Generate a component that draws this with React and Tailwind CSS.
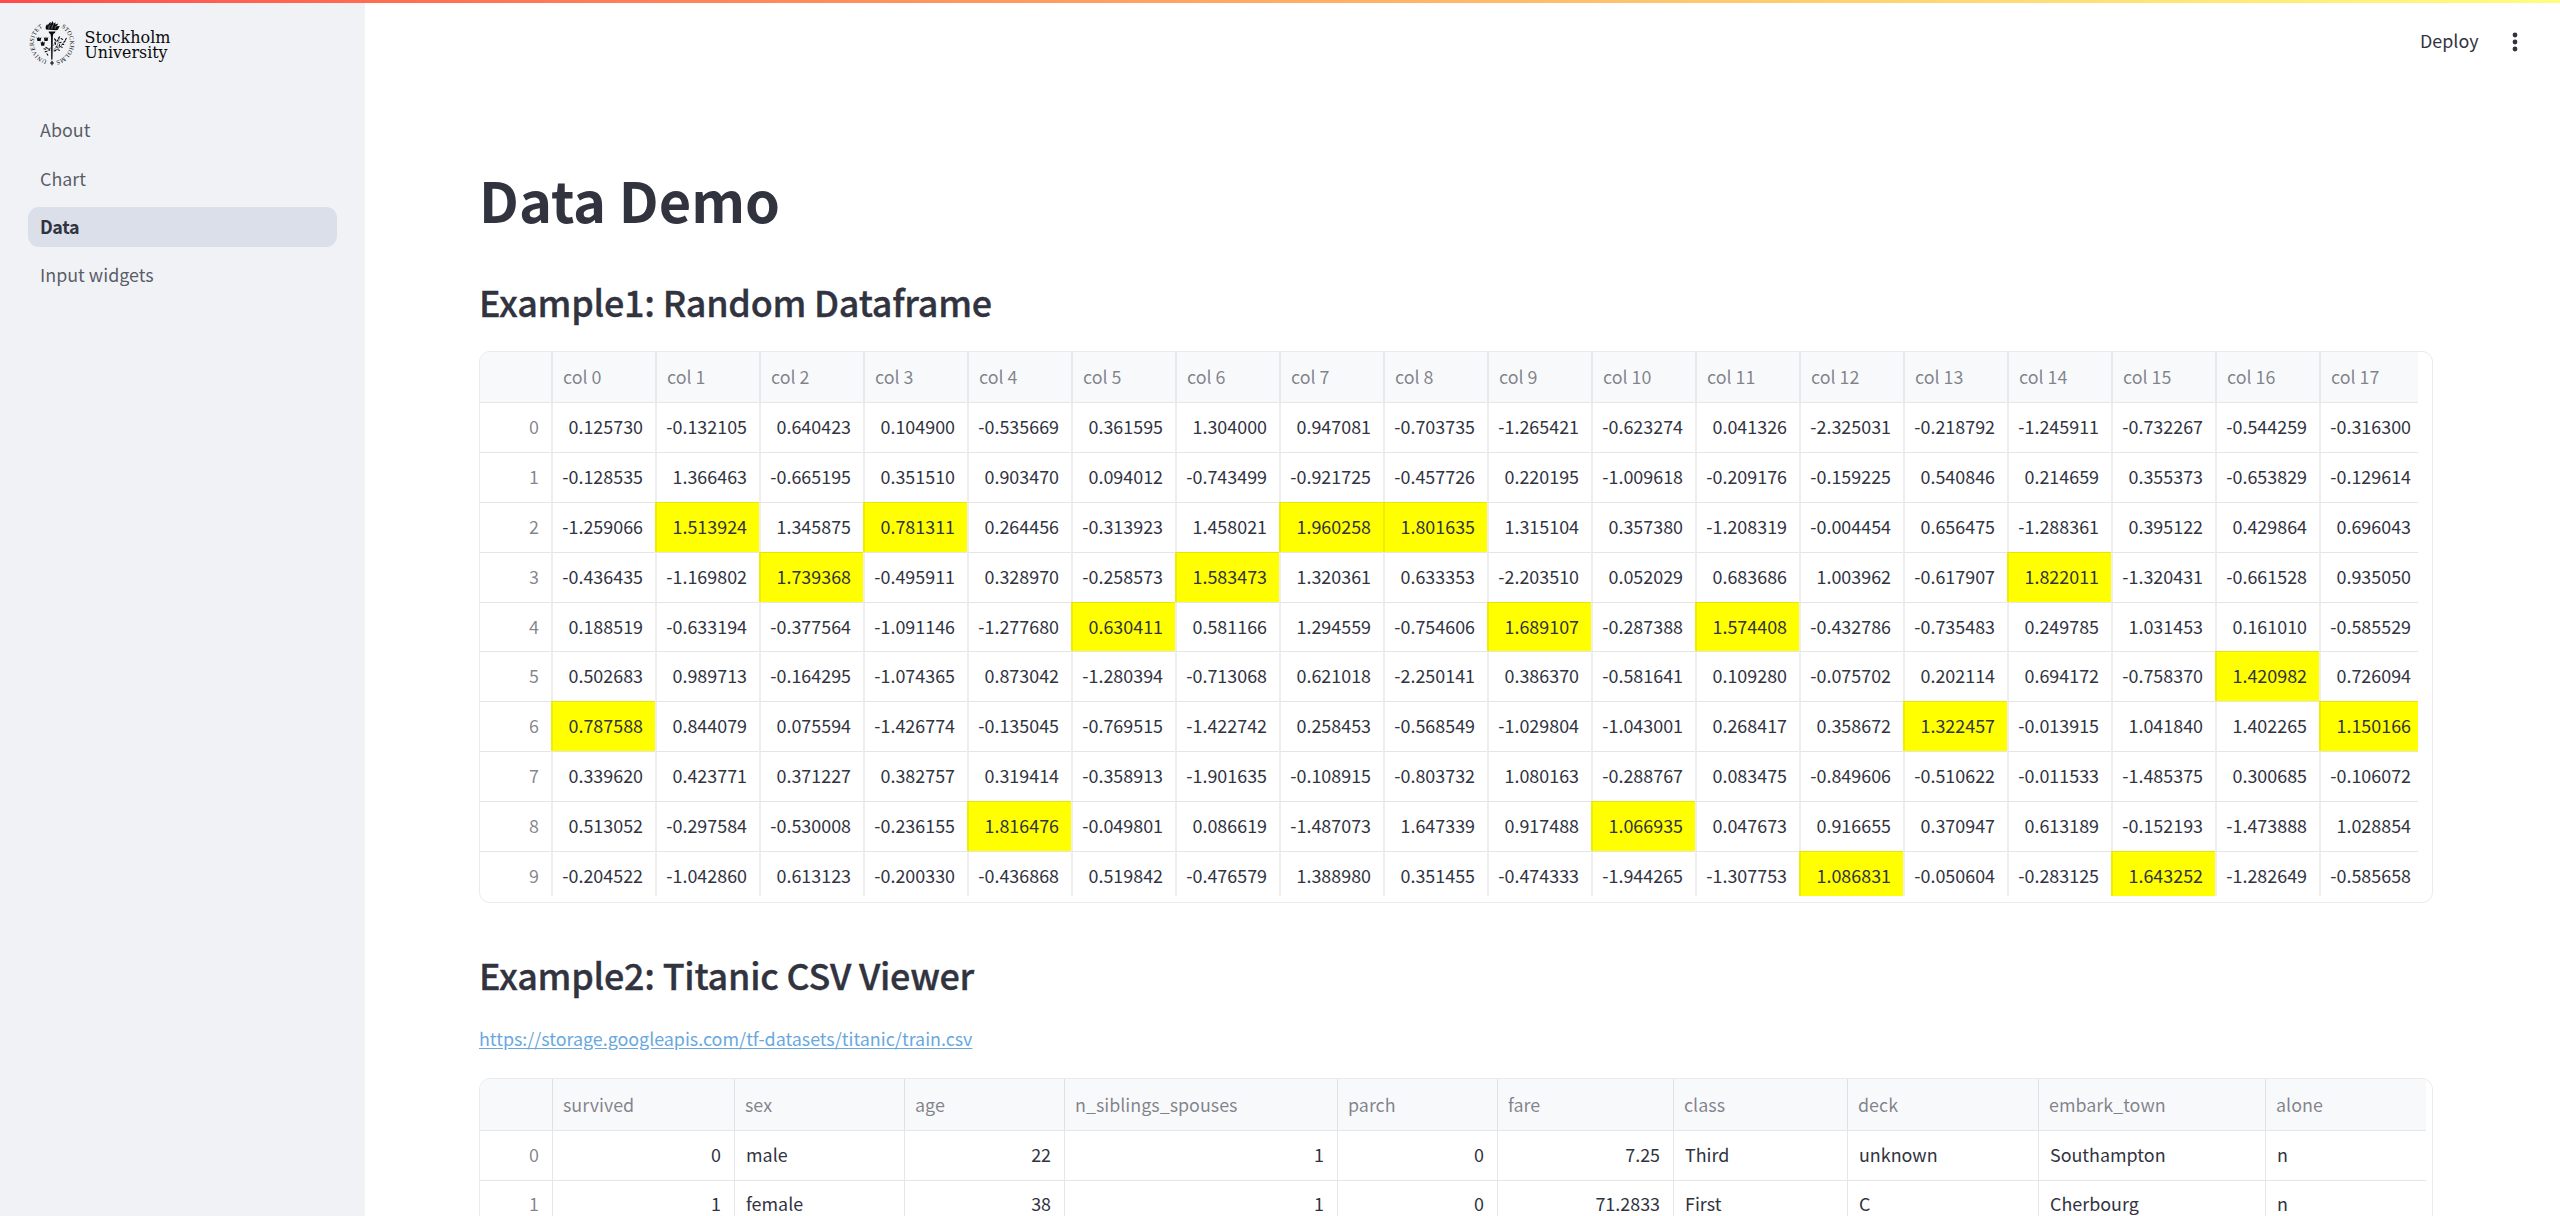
const NAV = ["About", "Chart", "Data", "Input widgets"];

const RANDOM = [
  "0.125730 -0.132105 0.640423 0.104900 -0.535669 0.361595 1.304000 0.947081 -0.703735 -1.265421 -0.623274 0.041326 -2.325031 -0.218792 -1.245911 -0.732267 -0.544259 -0.316300",
  "-0.128535 1.366463 -0.665195 0.351510 0.903470 0.094012 -0.743499 -0.921725 -0.457726 0.220195 -1.009618 -0.209176 -0.159225 0.540846 0.214659 0.355373 -0.653829 -0.129614",
  "-1.259066 1.513924 1.345875 0.781311 0.264456 -0.313923 1.458021 1.960258 1.801635 1.315104 0.357380 -1.208319 -0.004454 0.656475 -1.288361 0.395122 0.429864 0.696043",
  "-0.436435 -1.169802 1.739368 -0.495911 0.328970 -0.258573 1.583473 1.320361 0.633353 -2.203510 0.052029 0.683686 1.003962 -0.617907 1.822011 -1.320431 -0.661528 0.935050",
  "0.188519 -0.633194 -0.377564 -1.091146 -1.277680 0.630411 0.581166 1.294559 -0.754606 1.689107 -0.287388 1.574408 -0.432786 -0.735483 0.249785 1.031453 0.161010 -0.585529",
  "0.502683 0.989713 -0.164295 -1.074365 0.873042 -1.280394 -0.713068 0.621018 -2.250141 0.386370 -0.581641 0.109280 -0.075702 0.202114 0.694172 -0.758370 1.420982 0.726094",
  "0.787588 0.844079 0.075594 -1.426774 -0.135045 -0.769515 -1.422742 0.258453 -0.568549 -1.029804 -1.043001 0.268417 0.358672 1.322457 -0.013915 1.041840 1.402265 1.150166",
  "0.339620 0.423771 0.371227 0.382757 0.319414 -0.358913 -1.901635 -0.108915 -0.803732 1.080163 -0.288767 0.083475 -0.849606 -0.510622 -0.011533 -1.485375 0.300685 -0.106072",
  "0.513052 -0.297584 -0.530008 -0.236155 1.816476 -0.049801 0.086619 -1.487073 1.647339 0.917488 1.066935 0.047673 0.916655 0.370947 0.613189 -0.152193 -1.473888 1.028854",
  "-0.204522 -1.042860 0.613123 -0.200330 -0.436868 0.519842 -0.476579 1.388980 0.351455 -0.474333 -1.944265 -1.307753 1.086831 -0.050604 -0.283125 1.643252 -1.282649 -0.585658",
].map((row) => row.split(" "));

const columnMax = RANDOM[0].map((_, c) => Math.max(...RANDOM.map((r) => Number(r[c]))));

const TITANIC_HEAD = ["survived", "sex", "age", "n_siblings_spouses", "parch", "fare", "class", "deck", "embark_town", "alone"];
const TITANIC_TEXT = [false, true, false, false, false, false, true, true, true, true];
const TITANIC = [
  ["0", "male", "22", "1", "0", "7.25", "Third", "unknown", "Southampton", "n"],
  ["1", "female", "38", "1", "0", "71.2833", "First", "C", "Cherbourg", "n"],
];

const cell = "flex items-center whitespace-nowrap overflow-hidden";
const wideLine = "border-l-2 border-l-[#31333f]/[0.08]";
const thinLine = "border-l border-l-[#31333f]/[0.12]";
const topLine = "border-t border-t-[#31333f]/[0.12]";

const LEAVES = [
  [17.5, 32.5, -20], [19, 35.5, 60], [18.2, 28.8, 30], [20.8, 30.5, 80], [16.4, 30, 10],
  [27, 31.5, -40], [28.5, 28, 20], [27, 24.5, 70], [29, 21.5, -50], [26.6, 20.5, 50],
  [31, 26.5, -70], [32, 23.5, -20], [30.6, 18.6, -60], [33.5, 20, 30], [34.5, 25.3, 10],
  [36.2, 22.5, -40], [33, 28, 20], [30.3, 31, 20], [37.5, 20, -60],
];

function Logo() {
  return (
    <svg width="144" height="48" viewBox="0 0 144 48" className="block" fill="#0b0b0d">
      <g transform="translate(0.4 -1)">
        <path id="ring" fill="none" d="M23.6 42.1 A18.1 18.1 0 0 1 23.6 5.9 A18.1 18.1 0 0 1 23.6 42.1" />
        <g fontFamily="'Liberation Serif', serif" fontSize="6.2">
          <text><textPath href="#ring" startOffset="5" textLength="42" lengthAdjust="spacing">UNIVERSITET</textPath></text>
          <text><textPath href="#ring" startOffset="66" textLength="43" lengthAdjust="spacing">STOCKHOLMS</textPath></text>
        </g>
        <path d="M23 41.8h1.200v1.700h1.400v.9h-1.400v1.800H23v-1.800h-1.400v-.9H23z" />
        <path d="M20.300 12.500h6.800l-.6 1.600-1.700.8-.4 3.200-.3 21.800-.7 1.200-.6-1.200-.2-21.800-.5-3.200-1.500-.8z" />
        <path d="M17.600 10.600c-.8-2.400-.3-4 1.300-5.600l.4 1.500c.8-1.200 1-2.200 3.100-3.400l-.2 2 2.300-3.200.5 2.900 2.200-1.600-.4 2.400 3-1-1.300 2.600 2.900-.3-2 3.800-1.500.6z" />
        <g stroke="#f0f2f6" strokeWidth=".5" fill="none">
          <path d="M20.500 9.800c-.3-1.700.5-3 1.600-4M23.600 9.800c-.2-2 .6-3.300 1.600-4.400M26.600 9.600c0-1.500 1-2.400 2-3" />
        </g>
        <path d="M8.200 18l1.400 1.500.8-2 .9 2L13 18l-.8 4.100H9zM15.400 17.800l1.400 1.600.8-2 .8 2 1.500-1.600-.7 4.300h-3.100zM12.200 22.400l1.200 1.300.9-1.800.9 1.800 1.300-1.300-.7 4.400h-3z" />
        <path d="M25 31c4-3 5.500-8 6-13M25 32c5-1.500 9-6 12-11M17 33c3-1 5-3 6.500-6M18 29l4 2M24.500 27c1.500-2 2.500-4 2.800-6.500" stroke="#0b0b0d" strokeWidth=".5" fill="none" />
        {LEAVES.map(([x, y, a]) => (
          <ellipse key={`${x}-${y}`} cx={x} cy={y} rx="1.500" ry=".6" transform={`rotate(${a} ${x} ${y})`} />
        ))}
      </g>
      <g fontFamily="'DejaVu Serif Condensed', 'DejaVu Serif', serif" fontSize="16.300">
        <text x="56.500" y="23.200" textLength="86" lengthAdjust="spacingAndGlyphs">Stockholm</text>
        <text x="56.500" y="37.800" textLength="83" lengthAdjust="spacingAndGlyphs">University</text>
      </g>
    </svg>
  );
}

function RandomTable() {
  return (
    <div className="h-[552px] w-[1954px] overflow-hidden rounded-[11px] border border-[#31333f]/10">
      <div className="grid h-[544px] w-[1938px] grid-cols-[71px_repeat(17,104px)_99px] grid-rows-[50px] auto-rows-[49.9px] overflow-hidden text-[17.9px]">
        <div className={`${cell} bg-[#f8f9fb]`} />
        {columnMax.map((_, c) => (
          <div key={c} className={`${cell} ${wideLine} bg-[#f8f9fb] pb-[2px] pl-[10px] text-[#31333f]/60`}>{`col ${c}`}</div>
        ))}
        {RANDOM.map((row, r) => [
          <div key={`i${r}`} className={`${cell} ${topLine} justify-end pr-[12px] pb-[2px] text-[#31333f]/60`}>{r}</div>,
          ...row.map((v, c) => (
            <div
              key={`${r}-${c}`}
              className={`${cell} ${topLine} ${wideLine} justify-end pb-[2px] ${c === 17 ? "pr-[7px]" : "pr-[12px]"} ${Number(v) === columnMax[c] ? "bg-[#ffff00]" : ""}`}
            >
              {v}
            </div>
          )),
        ])}
      </div>
    </div>
  );
}

function TitanicTable() {
  return (
    <div className="h-[560px] w-[1954px] overflow-hidden rounded-[11px] border border-[#31333f]/10">
      <div className="grid w-[1946px] grid-cols-[72px_182px_170px_160px_273px_160px_176px_174px_191px_227px_161px] grid-rows-[51px] auto-rows-[49.9px] text-[17.9px]">
        <div className={`${cell} bg-[#f8f9fb]`} />
        {TITANIC_HEAD.map((h) => (
          <div key={h} className={`${cell} ${thinLine} bg-[#f8f9fb] pb-px pl-[10px] text-[#31333f]/60`}>{h}</div>
        ))}
        {TITANIC.map((row, r) => [
          <div key={`i${r}`} className={`${cell} ${topLine} justify-end pr-[13px] pb-[3px] text-[#31333f]/60`}>{r}</div>,
          ...row.map((v, c) => (
            <div
              key={`${r}-${c}`}
              className={`${cell} ${topLine} ${thinLine} pb-[3px] ${TITANIC_TEXT[c] ? "pl-[11px]" : "justify-end pr-[13px]"}`}
            >
              {v}
            </div>
          )),
        ])}
      </div>
    </div>
  );
}

export default function App() {
  return (
    <div className="flex h-screen w-full flex-col overflow-hidden bg-white font-['Noto_Sans_CJK_SC','Source_Sans_Pro',sans-serif] text-[#31333f]">
      <div className="h-[3px] shrink-0 bg-linear-to-r from-[#ff4b4b] to-[#fffd80]" />
      <div className="flex min-h-0 flex-1">
        <aside className="w-[365px] shrink-0 bg-[#f0f2f6]">
          <div className="pt-[17px] pl-[28px]"><Logo /></div>
          <nav className="mt-[42.700px] flex flex-col gap-[8.400px] pr-[28px] pl-[28px]">
            {NAV.map((n) => (
              <a
                key={n}
                className={`flex h-[40px] items-center rounded-[11px] pb-[2px] pl-[12px] text-[17.9px] ${n === "Data" ? "bg-[#dadfe9] font-bold tracking-[-0.4px]" : "text-[#31333f]/80"}`}
              >
                {n}
              </a>
            ))}
          </nav>
        </aside>
        <main className="flex min-w-0 flex-1 flex-col">
          <header className="flex h-[80px] shrink-0 items-center justify-end pr-[34px] pb-[2px]">
            <span className="mr-[25.500px] pb-[3px] text-[17.9px]">Deploy</span>
            <svg width="22" height="22" viewBox="0 0 22 22" fill="#31333f">
              <circle cx="11" cy="4" r="2.400" /><circle cx="11" cy="11" r="2.400" /><circle cx="11" cy="18" r="2.400" />
            </svg>
          </header>
          <div className="flex min-h-0 flex-1 flex-col overflow-hidden pl-[114px]">
            <h1 className="mt-[76px] h-[80px] shrink-0 text-[55.9px] leading-[80px] font-bold">Data Demo</h1>
            <h2 className="mt-[37px] h-[50px] shrink-0 text-[35.9px] leading-[50px] font-medium tracking-[-0.23px] [-webkit-text-stroke:0.35px_#31333f]">Example1: Random Dataframe</h2>
            <div className="mt-[25px] shrink-0"><RandomTable /></div>
            <h2 className="mt-[46px] h-[50px] shrink-0 text-[35.9px] leading-[50px] font-medium tracking-[-0.23px] [-webkit-text-stroke:0.35px_#31333f]">Example2: Titanic CSV Viewer</h2>
            <p className="mt-[23px] h-[32px] shrink-0 text-[17.9px] leading-[32px] tracking-[-0.02px] text-[#68a8df]">
              <a className="underline underline-offset-[2px]">https://storage.googleapis.com/tf-datasets/titanic/train.csv</a>
            </p>
            <div className="mt-[24px] shrink-0"><TitanicTable /></div>
          </div>
        </main>
      </div>
    </div>
  );
}
